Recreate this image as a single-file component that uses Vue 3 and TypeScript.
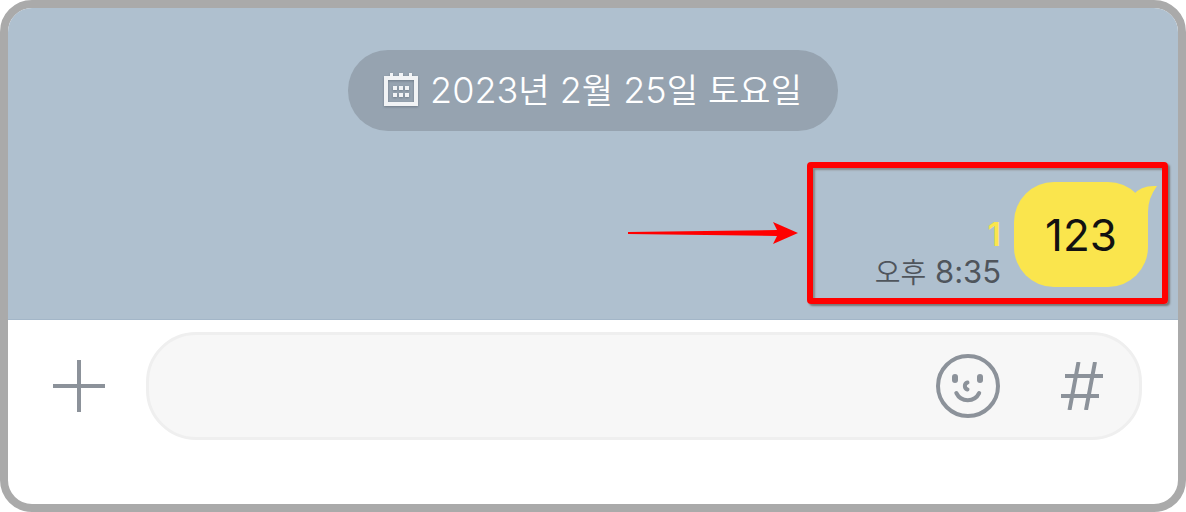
<script setup lang="ts">
import { ref } from 'vue'

interface Message {
  id: number
  text: string
  period: string
  time: string
  unread: number
}

const dateParts: { value: string; unit: string }[] = [
  { value: '2023', unit: '년' },
  { value: '2', unit: '월' },
  { value: '25', unit: '일' },
  { value: '', unit: '토요일' },
]
const messages: Message[] = [{ id: 1, text: '123', period: '오후', time: '8:35', unread: 1 }]
const draft = ref('')
</script>

<template>
  <main class="frame">
    <section class="chat">
      <div class="date">
        <svg class="calendar" viewBox="0 0 34 34" aria-hidden="true">
          <path
            fill="currentColor"
            fill-rule="evenodd"
            d="M6 0h3v3h6V0h4v3h6V0h3v3h6v30H0V3h6zM4 7v22h26V7z"
          />
          <path
            fill="currentColor"
            d="M9 13h4v4H9zM15 13h4v4h-4zM21 13h4v4h-4zM9 20h4v4H9zM15 20h4v4h-4zM21 20h4v4h-4z"
          />
        </svg>
        <time datetime="2023-02-25">
          <template v-for="(part, index) in dateParts" :key="part.unit"
            ><template v-if="index > 0">{{ ' ' }}</template
            >{{ part.value }}<span class="unit">{{ part.unit }}</span></template
          >
        </time>
      </div>

      <div v-for="message in messages" :key="message.id" class="row">
        <svg class="arrow" viewBox="0 0 170 24" aria-hidden="true">
          <path fill="#f00" d="M0 11L149 9L145 1L170 12L145 23L149 15L0 13z" />
        </svg>
        <div class="highlight">
          <div class="meta">
            <span class="unread">{{ message.unread }}</span>
            <time><span class="period">{{ message.period }}</span> {{ message.time }}</time>
          </div>
          <div class="bubble">
            {{ message.text }}
            <svg class="tail" viewBox="0 0 24 40" aria-hidden="true">
              <path fill="currentColor" d="M0 10Q8 0 24 1Q15 13 15 27V40L0 24z" />
            </svg>
          </div>
        </div>
      </div>
    </section>

    <form class="composer" @submit.prevent>
      <button class="icon" type="button" aria-label="첨부">
        <svg class="plus" viewBox="0 0 52 52" aria-hidden="true">
          <path d="M26 0V52M0 26H52" fill="none" stroke="currentColor" stroke-width="4" />
        </svg>
      </button>
      <div class="field">
        <input v-model="draft" type="text" aria-label="메시지" />
        <button class="icon" type="button" aria-label="이모티콘">
          <svg class="smile" viewBox="0 0 64 64" aria-hidden="true">
            <g fill="none" stroke="currentColor" stroke-width="4" stroke-linecap="round">
              <circle cx="32" cy="32" r="30" />
              <path d="M20.300 39C25 48.500 38.500 48.500 43.200 39" />
              <path d="M31.500 28.500C28 29.500 28 34.500 31.500 35.500" />
            </g>
            <rect x="16" y="20" width="6" height="9" rx="3" fill="currentColor" />
            <rect x="41" y="20" width="6" height="9" rx="3" fill="currentColor" />
          </svg>
        </button>
        <button class="icon" type="button" aria-label="샵 검색">
          <svg class="hash" viewBox="0 0 42 48" aria-hidden="true">
            <path
              d="M17.500 0L8.500 48M34 0L25 48M4 14H42M0 34H38"
              fill="none"
              stroke="currentColor"
              stroke-width="4"
            />
          </svg>
        </button>
      </div>
    </form>
  </main>
</template>

<style>
body {
  margin: 0;
  background: #fff;
}
</style>

<style scoped>
.frame {
  box-sizing: border-box;
  border: 8px solid #aaa;
  border-radius: 32px;
  overflow: hidden;
  background: #fff;
  font-family: Inter, 'Noto Sans CJK KR', sans-serif;
}

.chat {
  box-sizing: border-box;
  display: flex;
  flex-direction: column;
  align-items: center;
  gap: 31px;
  padding: 42px 10px 15px;
  border-bottom: 1px solid #a3b6c8;
  background: #afc0cf;
}

.date {
  display: flex;
  align-items: center;
  gap: 12px;
  padding: 18px 36px 19px;
  border-radius: 40px;
  background: #96a3b0;
  color: #fff;
  font-size: 36px;
  font-weight: 350;
  line-height: 44px;
  white-space: nowrap;
}

.unit {
  font-size: 34px;
  line-height: 34px;
}

.calendar {
  flex: none;
  width: 34px;
  height: 34px;
  color: #f1f3f5;
  filter: drop-shadow(0 1px 1px #6f7c89);
}

.row {
  display: flex;
  align-items: center;
  align-self: flex-end;
  gap: 9px;
}

.arrow {
  width: 170px;
  height: 24px;
}

.highlight {
  display: flex;
  align-items: flex-end;
  gap: 13px;
  padding: 14px 14px 11px 62px;
  border: 6px solid #f00;
  border-radius: 4px;
  box-shadow: 2px 2px 2px #777, inset 2px 2px 2px #888;
}

.meta {
  display: flex;
  flex-direction: column;
  align-items: flex-end;
  color: #4f555c;
  font-size: 31px;
  font-weight: 400;
  line-height: 30px;
  white-space: nowrap;
}

.period {
  font-size: 28px;
  font-weight: 350;
  line-height: 28px;
}

.unread {
  color: #fbe54d;
  font-size: 32px;
  font-weight: 600;
  line-height: 44px;
}

.bubble {
  position: relative;
  padding: 26px 31px 25px;
  border-radius: 40px;
  background: #fae54d;
  color: #111;
  font-size: 44px;
  font-weight: 400;
  line-height: 54px;
}

.tail {
  position: absolute;
  top: 3px;
  right: -9px;
  width: 24px;
  height: 40px;
  color: #fae54d;
}

.composer {
  display: flex;
  align-items: center;
  gap: 41px;
  padding: 12px 36px 64px 45px;
}

.icon {
  display: flex;
  flex: none;
  padding: 0;
  border: 0;
  background: none;
  color: #8c929a;
  cursor: pointer;
}

.plus {
  width: 52px;
  height: 52px;
}

.field {
  display: flex;
  flex: 1;
  align-items: center;
  min-width: 0;
  padding: 19px 36px;
  border: 3px solid #efefef;
  border-radius: 50px;
  background: #f7f7f7;
}

.field input {
  flex: 1;
  min-width: 0;
  height: 64px;
  padding: 0;
  border: 0;
  outline: 0;
  background: transparent;
  color: #111;
  font: inherit;
  font-size: 36px;
}

.smile {
  width: 64px;
  height: 64px;
  margin-right: 61px;
}

.hash {
  width: 42px;
  height: 48px;
}
</style>
